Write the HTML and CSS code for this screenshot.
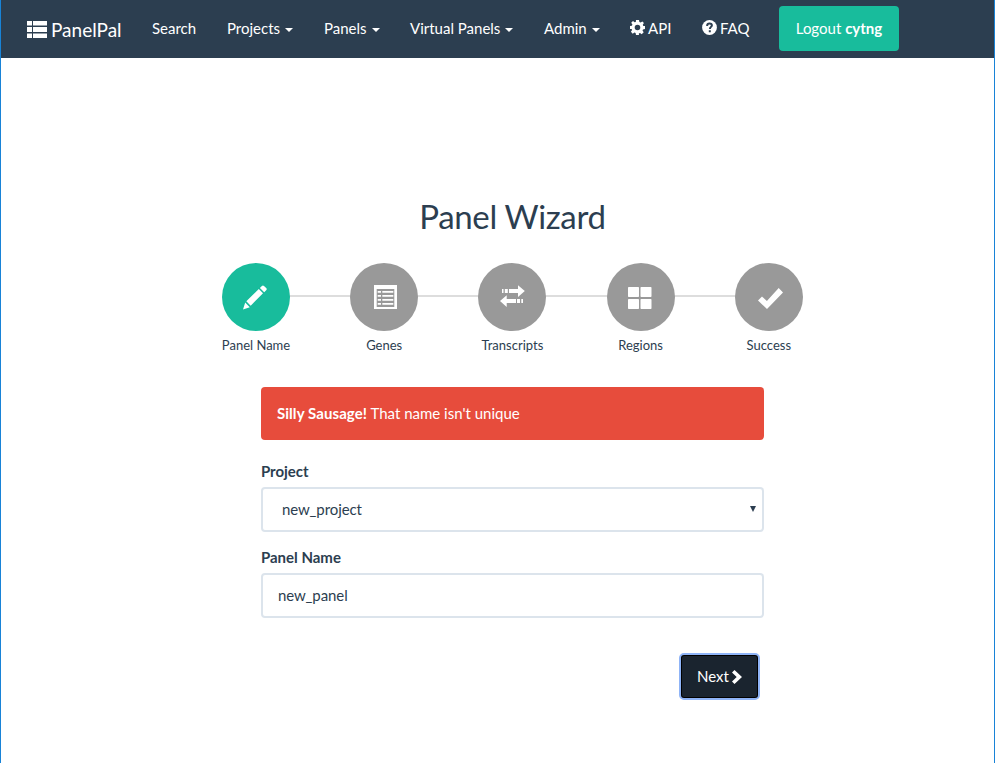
FILE: index.html
```
<!DOCTYPE html>
<html lang="en">
<head>
<meta charset="utf-8">
<title>PanelPal</title>
<link rel="stylesheet" href="styles.css">
</head>
<body>
<nav class="navbar">
  <a class="brand"><svg width="20" height="17" viewBox="0 0 20 17"><path d="M0 0h5v4.500H0zM6 0h14v4.500H6zM0 6h5v5H0zM6 6h14v5H6zM0 12.500h5V17H0zM6 12.500h14V17H6z"/></svg><span>PanelPal</span></a>
  <a class="link search"><span>Search</span></a>
  <a class="link projects"><span>Projects</span><i class="caret"></i></a>
  <a class="link panels"><span>Panels</span><i class="caret"></i></a>
  <a class="link virtual"><span>Virtual Panels</span><i class="caret"></i></a>
  <a class="link admin"><span>Admin</span><i class="caret"></i></a>
  <a class="link api"><svg width="15" height="15" viewBox="0 0 15 15"><path fill-rule="evenodd" d="M6 0h3l.4 2.100 1.200.5L12.400 1.400l1.500 1.500-1.100 1.800.5 1.200L15 6v3l-2 .4-.5 1.200 1.200 1.700-2 2-1.700-1.200-1.200.5L9 15H6l-.4-2-1.200-.5-1.700 1.200-1.800-1.900 1.200-1.700-.5-1.200L0 9V6l1.900-.3.5-1.200-1.200-1.700L3 1l1.600 1.300 1.200-.4zM7.500 4.700a2.800 2.800 0 1 0 0 5.600 2.800 2.800 0 0 0 0-5.600z"/></svg><span>API</span></a>
  <a class="link faq"><svg width="15" height="15" viewBox="0 0 15 15"><circle cx="7.500" cy="7.500" r="7.400"/><path class="mark" d="M5.200 6V5.300c0-1.200 1-1.900 2.300-1.900 1.500 0 2.400.8 2.400 1.900 0 1.600-2 1.600-2 3.600M7.800 10.200v2"/></svg><span>FAQ</span></a>
  <a class="logout"><span>Logout <b>cytng</b></span></a>
</nav>
<main class="content">
  <h1><span>Panel Wizard</span></h1>
  <ol class="steps">
    <li class="step active"><div class="disc"><svg width="27" height="27" viewBox="0 0 27 27"><path d="M1 25.500l2.200-7 4.600 4.700zM4.300 17.300L16.800 5l4.200 4.300L8.700 21.700zM17.900 3.900l2-2c.7-.7 1.400-.7 2.100 0l2.200 2.200c.7.700.7 1.400 0 2.100l-2 2z"/></svg></div><span>Panel Name</span></li>
    <li class="step"><div class="disc"><svg class="genes" width="23" height="24" viewBox="0 0 23 24"><path fill-rule="evenodd" d="M0 0h23v24H0zM2.700 4v18h17.600V4z"/><path d="M3.700 6H7v1.800H3.700zM8.300 6h11v1.800h-11zM3.700 10H7v1.800H3.700zM8.300 10h11v1.800h-11zM3.700 14H7v1.800H3.700zM8.300 14h11v1.800h-11zM3.700 18H7v1.800H3.700zM8.300 18h11v1.800h-11z"/></svg></div><span>Genes</span></li>
    <li class="step"><div class="disc"><svg class="transcripts" width="25" height="22" viewBox="0 0 25 22"><path d="M2 4h1.500v4H2zM4.800 4h3v4h-3zM9 4h9V.200L24.800 6 18 12V8H9zM6.700 10.200v3.800H16v4H6.700v4L0 16zM17 14h3v4h-3zM21.300 14h1.700v4h-1.700z"/></svg></div><span>Transcripts</span></li>
    <li class="step"><div class="disc"><svg class="regions" width="24" height="22" viewBox="0 0 24 22"><rect width="11" height="10" rx=".7"/><rect x="12.500" width="11" height="10" rx=".7"/><rect y="12" width="11" height="10" rx=".7"/><rect x="12.500" y="12" width="11" height="10" rx=".7"/></svg></div><span>Regions</span></li>
    <li class="step"><div class="disc"><svg class="success" width="25" height="21" viewBox="0 0 25 21"><path d="M0 12.500l4-4 4.900 4.600L20.700 0 25 4.500 9 21z"/></svg></div><span>Success</span></li>
  </ol>
  <form class="form">
    <div class="alert"><span><b>Silly Sausage!</b> That name isn't unique</span></div>
    <label>Project</label>
    <div class="control select"><span>new_project</span><i class="arrow"></i></div>
    <label>Panel Name</label>
    <div class="control"><span>new_panel</span></div>
    <div class="actions"><button type="button"><span>Next</span><svg width="10" height="14" viewBox="0 0 10 14"><path d="M2.500 0L10 7l-7.500 7L0 11.500 4.700 7 0 2.500z"/></svg></button></div>
  </form>
</main>
</body>
</html>
```
FILE: styles.css
```
* { box-sizing: border-box; }
body {
  margin: 0;
  min-height: 763px;
  border: solid #1883d7;
  border-width: 0 1px;
  background: #fff;
  color: #2c3e50;
  font: 15px/21px Lato, sans-serif;
}
svg { display: block; flex: none; fill: currentColor; }
.navbar {
  display: flex;
  height: 58px;
  padding-left: 11px;
  background: #2c3e50;
  color: #fff;
}
.brand, .link { display: flex; align-items: center; white-space: nowrap; }
.brand { width: 125px; padding: 1px 0 0 15px; gap: 4px; font-size: 19px; }
.link { padding: 0 0 1px 15px; }
.search { width: 75px; }
.projects { width: 97px; }
.panels { width: 86px; }
.virtual { width: 134px; }
.admin { width: 86px; }
.api { width: 72px; gap: 3px; }
.faq { width: 77px; gap: 3px; }
.link svg { margin-bottom: 2px; }
.caret {
  margin: 3px 0 0 5px;
  border: solid transparent;
  border-width: 4px 4px 0;
  border-top-color: #fff;
}
.mark { fill: none; stroke: #2c3e50; stroke-width: 2; }
.logout {
  display: flex;
  align-items: center;
  justify-content: center;
  width: 120px;
  height: 45px;
  margin: 6px 0 0 15px;
  border-radius: 4px;
  background: #18bc9c;
  white-space: nowrap;
}
.content { padding: 138px 0 0 29.8px; }
h1 {
  margin: 0;
  font-size: 33px;
  line-height: 40px;
  font-weight: 400;
  letter-spacing: -.35px;
  text-align: center;
}
.steps {
  display: flex;
  justify-content: space-between;
  width: 641px;
  margin: 27px auto 0;
  padding: 0;
  list-style: none;
}
.step {
  display: flex;
  flex: 1;
  flex-direction: column;
  align-items: center;
  background: linear-gradient(#ddd, #ddd) 0 32px / 100% 2px no-repeat;
  font-size: 13px;
  line-height: 18px;
}
.step:first-child { background-position: 100% 32px; background-size: 50% 2px; }
.step:last-child { background-size: 50% 2px; }
.disc {
  display: flex;
  align-items: center;
  justify-content: center;
  width: 68px;
  height: 68px;
  margin-bottom: 5px;
  border-radius: 50%;
  background: #999;
  color: #fff;
}
.active .disc { background: #18bc9c; }
.genes { margin-left: 3px; }
.transcripts { margin-bottom: 2px; }
.regions { margin: 2px 0 0 -2px; }
.success { margin: 2px 0 0 3px; }
.form { width: 503px; margin: 33px auto 0; }
.alert {
  height: 53px;
  margin-bottom: 21px;
  padding: 16px;
  border-radius: 4px;
  background: #e74c3c;
  color: #fff;
}
.alert b { letter-spacing: .08px; }
label { display: block; margin-bottom: 5px; font-weight: 700; }
.control {
  display: flex;
  align-items: center;
  height: 45px;
  margin-bottom: 15px;
  padding: 0 15px;
  border: 2px solid #dce4ec;
  border-radius: 4px;
  letter-spacing: -.1px;
}
.select { justify-content: space-between; padding: 0 6px 0 19px; }
.arrow {
  margin-bottom: 1px;
  border: solid transparent;
  border-width: 6px 3px 0;
  border-top-color: #2c3e50;
}
.actions { display: flex; justify-content: flex-end; padding: 21px 5px 0 0; }
button {
  display: flex;
  align-items: center;
  justify-content: center;
  gap: 3px;
  width: 79px;
  height: 45px;
  padding: 0;
  border: 2px solid #000;
  border-radius: 4px;
  outline: 2px solid #8fb4f7;
  outline-offset: -1px;
  background: #1a242f;
  color: #fff;
  font: 15px/21px Lato, sans-serif;
}
```
